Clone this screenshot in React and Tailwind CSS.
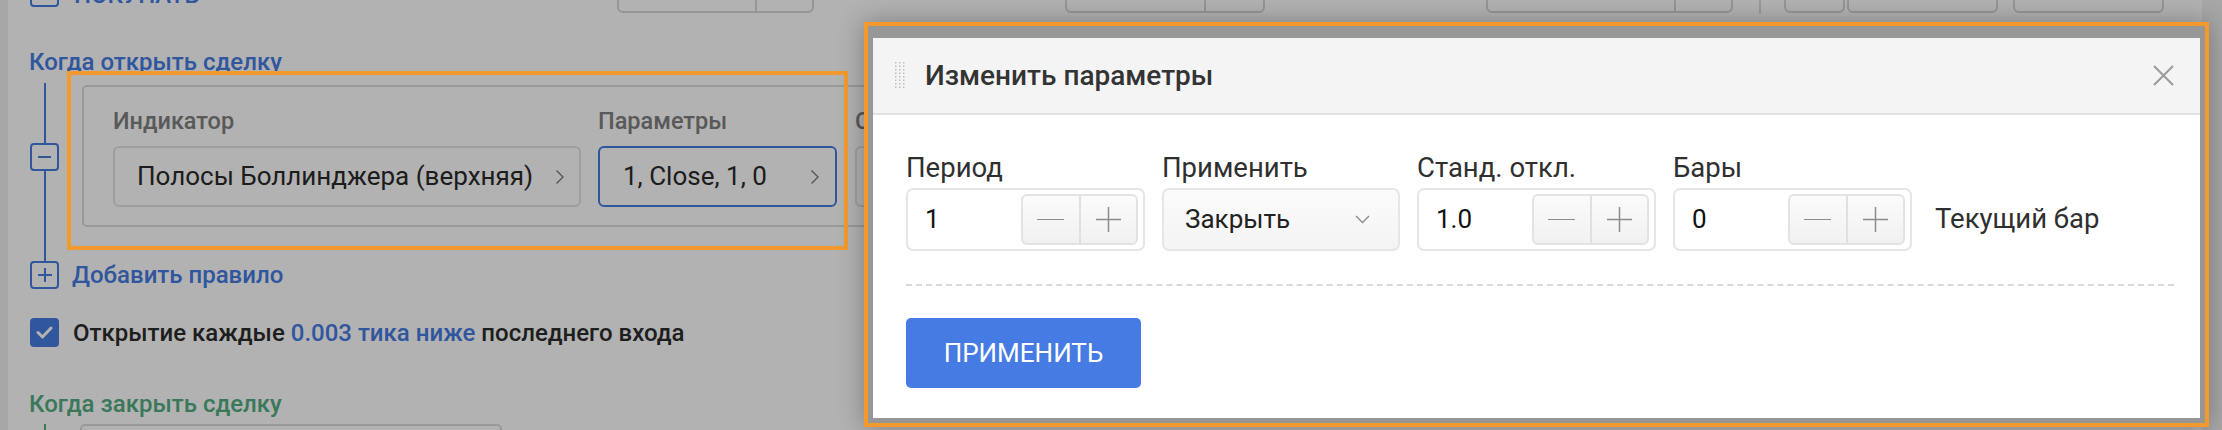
import React from "react";

const Chevron = () => (
  <svg width="10" height="16" viewBox="0 0 10 16" fill="none">
    <path d="M1.5 1.5 L8 8 L1.5 14.5" stroke="#7a7a7a" strokeWidth="1.4" />
  </svg>
);

const Stepper = () => (
  <div className="flex h-[51px] w-[117px] shrink-0 rounded-[6px] border-2 border-[#e3e3e3] bg-gradient-to-b from-[#fbfbfb] to-[#f1f1f1]">
    <div className="flex flex-1 items-center justify-center">
      <div className="h-[1.5px] w-[27px] bg-[#8c8c8c]" />
    </div>
    <div className="flex flex-1 items-center justify-center border-l-2 border-[#e0e0e0]">
      <svg width="25" height="25" viewBox="0 0 25 25">
        <path d="M12.5 0 V25 M0 12.5 H25" stroke="#8c8c8c" strokeWidth="1.5" />
      </svg>
    </div>
  </div>
);

const NumberField = ({ value }) => (
  <div className="flex h-[63px] w-[239px] items-center justify-between rounded-[7px] border-2 border-[#e6e6e6] bg-white pl-[17px] pr-[5px]">
    <span className="text-[26px] text-[#111]">{value}</span>
    <Stepper />
  </div>
);

const Field = ({ label, children }) => (
  <div className="flex flex-col">
    <span className="text-[27.5px] leading-[30px] text-[#2f2f2f]">{label}</span>
    <div className="mt-[5px]">{children}</div>
  </div>
);

export default function App() {
  return (
    <div className="relative h-[430px] w-[2222px] overflow-hidden bg-white font-['Roboto',sans-serif]">
      {/* page under the dialog */}
      <div className="flex h-full">
        <div className="w-[8px] shrink-0 bg-[#efefef]" />
        <div className="flex flex-1 flex-col">
          {/* previous block, cut off at top */}
          <div className="flex h-[14px] shrink-0 items-end overflow-hidden">
            <div className="flex w-[609px] shrink-0 items-end">
              <div className="mb-[7px] ml-[22px] h-[29px] w-[29px] shrink-0 rounded-[4px] border-2 border-[#457be2]" />
              <span className="mb-[5px] ml-[15px] text-[24px] font-medium leading-[28px] text-[#457be2]">
                ПОКУПАТЬ
              </span>
            </div>
            <div className="mb-[1px] flex h-[40px] w-[197px] shrink-0 rounded-[6px] border-2 border-[#d6d6d6]">
              <div className="w-[136px]" />
              <div className="flex-1 border-l-2 border-[#d6d6d6]" />
            </div>
            <div className="mb-[1px] ml-[251px] flex h-[40px] w-[200px] shrink-0 rounded-[6px] border-2 border-[#d6d6d6]">
              <div className="w-[137px]" />
              <div className="flex-1 border-l-2 border-[#d6d6d6]" />
            </div>
            <div className="mb-[1px] ml-[221px] flex h-[40px] w-[247px] shrink-0 rounded-[6px] border-2 border-[#d6d6d6]">
              <div className="w-[186px]" />
              <div className="flex-1 border-l-2 border-[#d6d6d6]" />
            </div>
            <div className="ml-[26px] h-[14px] w-[2px] shrink-0 bg-[#dcdcdc]" />
            <div className="mb-[1px] ml-[23px] h-[40px] w-[61px] shrink-0 rounded-[6px] border-2 border-[#d6d6d6]" />
            <div className="mb-[1px] ml-[2px] h-[40px] w-[151px] shrink-0 rounded-[6px] border-2 border-[#d6d6d6]" />
            <div className="mb-[1px] ml-[15px] h-[40px] w-[151px] shrink-0 rounded-[6px] border-2 border-[#d6d6d6]" />
          </div>

          <h2 className="ml-[21px] mt-[34px] text-[24px] font-medium leading-[28px] text-[#457be2]">
            Когда открыть сделку
          </h2>

          {/* rule row */}
          <div className="mt-[7px] flex">
            <div className="ml-[22px] flex w-[29px] shrink-0 flex-col items-center">
              <div className="h-[60px] w-[2px] bg-[#457be2]" />
              <div className="flex h-[28px] w-[29px] items-center justify-center rounded-[4px] border-2 border-[#457be2]">
                <div className="h-[2px] w-[13px] bg-[#457be2]" />
              </div>
              <div className="w-[2px] flex-1 bg-[#457be2]" />
            </div>
            <div className="mb-[34px] ml-[23px] mt-[2px] flex w-[1300px] gap-[17px] rounded-[5px] border-2 border-[#dcdcdc] pb-[18px] pl-[29px] pt-[21px]">
              <div className="flex w-[468px] shrink-0 flex-col">
                <span className="text-[23.5px] font-medium leading-[26px] text-[#808080]">Индикатор</span>
                <div className="mt-[12px] flex h-[61px] items-center justify-between rounded-[6px] border-2 border-[#e2e2e2] pl-[22px] pr-[14px]">
                  <span className="text-[26px] text-[#2a2a2a]">Полосы Боллинджера (верхняя)</span>
                  <Chevron />
                </div>
              </div>
              <div className="flex w-[239px] shrink-0 flex-col">
                <span className="text-[23.5px] font-medium leading-[26px] text-[#808080]">Параметры</span>
                <div className="mt-[12px] flex h-[61px] items-center justify-between rounded-[6px] border-2 border-[#457be2] pl-[23px] pr-[15px]">
                  <span className="text-[26px] text-[#2a2a2a]">1, Close, 1, 0</span>
                  <Chevron />
                </div>
              </div>
              <div className="ml-[1px] flex w-[300px] shrink-0 flex-col">
                <span className="text-[23.5px] font-medium leading-[26px] text-[#808080]">Сравнение</span>
                <div className="mt-[12px] h-[61px] rounded-[6px] border-2 border-[#e2e2e2]" />
              </div>
            </div>
          </div>

          <div className="flex items-center">
            <div className="ml-[22px] flex h-[28px] w-[29px] shrink-0 items-center justify-center rounded-[4px] border-2 border-[#457be2]">
              <svg width="14" height="14" viewBox="0 0 14 14">
                <path d="M7 0 V14 M0 7 H14" stroke="#457be2" strokeWidth="2" />
              </svg>
            </div>
            <span className="ml-[13px] text-[24px] font-medium leading-[28px] text-[#457be2]">
              Добавить правило
            </span>
          </div>

          <div className="mt-[29px] flex items-center">
            <div className="ml-[22px] flex h-[29px] w-[29px] shrink-0 items-center justify-center rounded-[4px] bg-[#457be2]">
              <svg width="17" height="13" viewBox="0 0 17 13" fill="none">
                <path d="M2 6.5 L6.5 11 L15 2" stroke="white" strokeWidth="3" strokeLinecap="round" strokeLinejoin="round" />
              </svg>
            </div>
            <span className="ml-[14px] text-[24px] font-medium leading-[28px] text-[#2c2c2c]">
              Открытие каждые <span className="text-[#457be2]">0.003 тика ниже</span> последнего входа
            </span>
          </div>

          <h2 className="ml-[21px] mt-[43px] text-[24px] font-medium leading-[28px] text-[#54ad82]">
            Когда закрыть сделку
          </h2>
          <div className="mt-[6px] flex">
            <div className="ml-[22px] flex w-[29px] shrink-0 justify-center">
              <div className="h-[40px] w-[2px] bg-[#54ad82]" />
            </div>
            <div className="ml-[21px] h-[60px] w-[422px] rounded-[5px] border-2 border-[#dcdcdc]" />
          </div>
        </div>
        <div className="w-[20px] shrink-0 bg-[#efefef]" />
      </div>

      {/* dim overlay */}
      <div className="absolute inset-0 bg-black/30" />

      {/* highlight of the rule card */}
      <div className="absolute left-[67px] top-[71px] h-[179px] w-[781px] border-[4px] border-[#f29a2e]" />

      {/* dialog */}
      <div className="absolute left-[864px] top-[22px] w-[1345px] border-[4px] border-[#f29a2e] bg-[#979797] px-[5px] pb-[5px] pt-[12px] shadow-[0_0_24px_rgba(0,0,0,0.3)]">
        <div className="flex flex-col bg-white">
          <div className="flex h-[77px] items-center border-b-2 border-[#e2e2e2] bg-[#f4f4f4] pl-[22px] pr-[26px]">
            <svg width="10" height="27" viewBox="0 0 10 27">
              {[0, 1, 2].map((c) =>
                [0, 1, 2, 3, 4, 5, 6, 7].map((r) => (
                  <rect key={`${c}-${r}`} x={c * 4} y={r * 3.5} width="1.5" height="1.5" fill="#bdbdbd" />
                ))
              )}
            </svg>
            <span className="ml-[20px] text-[28px] font-medium text-[#333]">Изменить параметры</span>
            <svg className="ml-auto" width="21" height="21" viewBox="0 0 21 21">
              <path d="M1 1 L20 20 M20 1 L1 20" stroke="#9a9a9a" strokeWidth="2" />
            </svg>
          </div>

          <div className="flex flex-col pb-[30px] pl-[33px] pr-[26px] pt-[38px]">
            <div className="flex items-end gap-[17px]">
              <Field label="Период">
                <NumberField value="1" />
              </Field>
              <Field label="Применить">
                <div className="flex h-[63px] w-[238px] items-center justify-between rounded-[7px] border-2 border-[#e6e6e6] bg-gradient-to-b from-[#fbfbfb] to-[#f4f4f4] pl-[21px] pr-[28px]">
                  <span className="text-[26px] text-[#222]">Закрыть</span>
                  <svg width="15" height="9" viewBox="0 0 15 9" fill="none">
                    <path d="M1 1 L7.5 7.5 L14 1" stroke="#8a8a8a" strokeWidth="1.3" />
                  </svg>
                </div>
              </Field>
              <Field label="Станд. откл.">
                <NumberField value="1.0" />
              </Field>
              <Field label="Бары">
                <NumberField value="0" />
              </Field>
              <span className="mb-[12px] ml-[6px] text-[27.5px] text-[#2f2f2f]">Текущий бар</span>
            </div>

            <div className="mt-[33px] border-t-2 border-dashed border-[#d6d9dd]" />

            <button className="mt-[32px] h-[70px] w-[235px] rounded-[5px] bg-[#457be2] text-[26px] text-white">
              ПРИМЕНИТЬ
            </button>
          </div>
        </div>
      </div>
    </div>
  );
}
